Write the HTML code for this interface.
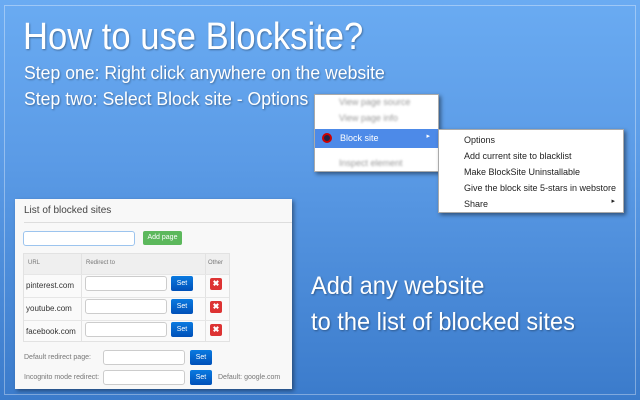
<!DOCTYPE html>
<html><head><style>
*{margin:0;padding:0;box-sizing:border-box}
body{width:640px;height:400px;overflow:hidden;position:relative;font-family:"Liberation Sans",sans-serif;background:linear-gradient(#6aabf2,#5b9be6 40%,#3b7bcb);}
.frame{position:absolute;left:4px;top:5px;right:4px;bottom:5px;border:1px solid rgba(255,255,255,.35);}
.h{position:absolute;color:#fff;white-space:nowrap;transform-origin:0 0;text-shadow:1px 1px 2px rgba(0,0,0,.35);}
.menu{position:absolute;background:#fff;box-shadow:2px 2px 4px rgba(0,0,0,.45);border:1px solid #aaa;font-size:9px;color:#222}
.blur{color:#999;filter:blur(1px);position:absolute;left:24px;font-size:9px}
.mi{position:absolute;left:25px;white-space:nowrap;font-size:9px}
.panel{position:absolute;left:15px;top:199px;width:277px;height:190px;background:#f8f8f8;box-shadow:2px 2px 4px rgba(0,0,0,.4);font-size:8px;color:#555}
.inp{position:absolute;background:#fff;border:1px solid #ccc;border-radius:3px;height:15px}
.set{position:absolute;background:linear-gradient(#0a7ae0,#0050b8);color:#fff;border-radius:2px;height:15px;width:22px;font-size:7px;text-align:center;line-height:15px}
.x{position:absolute;background:#d33;border-radius:2px;width:12px;height:12px;color:#fff;font-size:8px;text-align:center;line-height:12px;font-weight:bold}
.site{position:absolute;left:11px;font-size:8px;color:#333}
</style></head><body>
<div class="frame"></div>
<div class="h" style="left:23px;top:16px;font-size:38px;transform:scaleX(.91)">How to use Blocksite?</div>
<div class="h" style="left:24px;top:63px;font-size:18px;transform:scaleX(.98)">Step one: Right click anywhere on the website</div>
<div class="h" style="left:24px;top:89px;font-size:18px;transform:scaleX(.98)">Step two: Select Block site - Options</div>
<div class="h" style="left:311px;top:272px;font-size:25px;transform:scaleX(.945)">Add any website</div>
<div class="h" style="left:311px;top:308px;font-size:25px;transform:scaleX(.945)">to the list of blocked sites</div>

<div class="menu" style="left:314px;top:94px;width:125px;height:78px">
<div class="blur" style="top:2px">View page source</div>
<div class="blur" style="top:18px">View page info</div>
<div style="position:absolute;left:0;top:34px;width:123px;height:19px;background:#4d8ae8;color:#fff">
<div style="position:absolute;left:7px;top:4px;width:10px;height:10px;border-radius:50%;border:2px solid #c00;background:#224"></div>
<span style="position:absolute;left:25px;top:4px;font-size:9px">Block site</span>
<span style="position:absolute;right:8px;top:3px;font-size:7px">▸</span></div>
<div class="blur" style="top:63px">Inspect element</div>
</div>
<div class="menu" style="left:438px;top:129px;width:186px;height:84px">
<div class="mi" style="top:5px">Options</div>
<div class="mi" style="top:21px">Add current site to blacklist</div>
<div class="mi" style="top:37px">Make BlockSite Uninstallable</div>
<div class="mi" style="top:53px">Give the block site 5-stars in webstore</div>
<div class="mi" style="top:69px">Share</div>
<span style="position:absolute;right:8px;top:67px;font-size:7px">▸</span>
</div>

<div class="panel">
<div style="position:absolute;left:9px;top:6px;font-size:10px;color:#444">List of blocked sites</div>
<div style="position:absolute;left:9px;right:0;top:23px;border-top:1px solid #ddd"></div>
<div class="inp" style="left:8px;top:32px;width:112px;border-color:#9cc4ee"></div>
<div style="position:absolute;left:128px;top:32px;width:39px;height:14px;background:#5cb85c;border-radius:2px;color:#fff;font-size:7px;text-align:center;line-height:14px">Add page</div>
<div style="position:absolute;left:8px;top:54px;width:207px;height:89px;border:1px solid #e2e2e2;background:#fafafa">
<div style="position:absolute;left:0;top:0;width:100%;height:20px;background:#efefef"></div>
<div style="position:absolute;left:57px;top:0;height:100%;border-left:1px solid #e2e2e2"></div>
<div style="position:absolute;left:181px;top:0;height:100%;border-left:1px solid #e2e2e2"></div>
<div style="position:absolute;top:20px;width:100%;border-top:1px solid #e6e6e6"></div>
<div style="position:absolute;top:43px;width:100%;border-top:1px solid #e6e6e6"></div>
<div style="position:absolute;top:66px;width:100%;border-top:1px solid #e6e6e6"></div>
<span style="position:absolute;left:4px;top:6px;font-size:6px;color:#777">URL</span>
<span style="position:absolute;left:62px;top:6px;font-size:6px;color:#777">Redirect to</span>
<span style="position:absolute;left:184px;top:6px;font-size:6px;color:#777">Other</span>
</div>
<div class="site" style="top:82px">pinterest.com</div>
<div class="site" style="top:105px">youtube.com</div>
<div class="site" style="top:128px">facebook.com</div>
<div class="inp" style="left:70px;top:77px;width:82px"></div><div class="set" style="left:156px;top:77px">Set</div><div class="x" style="left:195px;top:79px">✖</div>
<div class="inp" style="left:70px;top:100px;width:82px"></div><div class="set" style="left:156px;top:100px">Set</div><div class="x" style="left:195px;top:102px">✖</div>
<div class="inp" style="left:70px;top:123px;width:82px"></div><div class="set" style="left:156px;top:123px">Set</div><div class="x" style="left:195px;top:125px">✖</div>
<div style="position:absolute;left:9px;top:155px;font-size:7px;color:#777">Default redirect page:</div>
<div class="inp" style="left:88px;top:151px;width:82px"></div><div class="set" style="left:175px;top:151px">Set</div>
<div style="position:absolute;left:9px;top:175px;font-size:7px;color:#777">Incognito mode redirect:</div>
<div class="inp" style="left:88px;top:171px;width:82px"></div><div class="set" style="left:175px;top:171px">Set</div>
<div style="position:absolute;left:203px;top:175px;font-size:7px;color:#777">Default: google.com</div>
</div>
</body></html>
